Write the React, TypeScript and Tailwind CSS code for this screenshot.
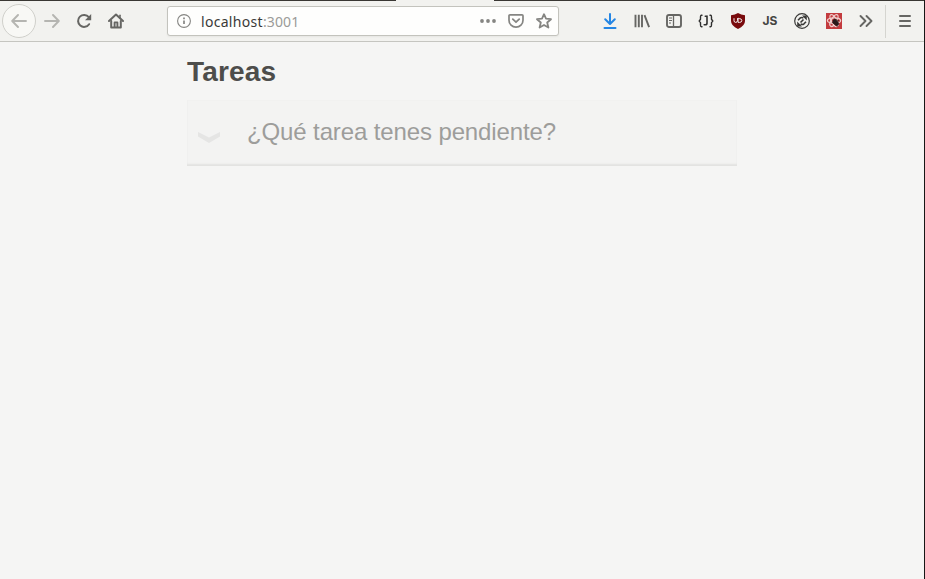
import React from 'react';

type IconProps = { children: React.ReactNode; className?: string };

function Icon({ children, className = 'text-[#666663]' }: IconProps) {
  return (
    <svg
      viewBox="0 0 16 16"
      className={`h-4 w-4 shrink-0 ${className}`}
      fill="none"
      stroke="currentColor"
      strokeWidth="2"
      strokeLinecap="round"
      strokeLinejoin="round"
    >
      {children}
    </svg>
  );
}

function ToolButton({ children, label }: { children: React.ReactNode; label: string }) {
  return (
    <button aria-label={label} className="flex h-8 w-8 shrink-0 items-center justify-center">
      {children}
    </button>
  );
}

function AddressBar() {
  return (
    <div className="ml-[35px] flex h-[30px] w-[392px] shrink-0 items-center rounded-[3px] border border-[#c3c3bd] bg-[#fefefd] shadow-[0_1px_2px_rgba(0,0,0,0.05)]">
      <Icon className="ml-2 text-[#858582]">
        <circle cx="8" cy="8" r="6.4" strokeWidth="1.1" />
        <path d="M8 7.5v3.4" strokeWidth="1.7" strokeLinecap="butt" />
        <path d="M8 4.5v1.7" strokeWidth="1.7" strokeLinecap="butt" />
      </Icon>
      <div className="ml-[9px] mt-px flex-1 whitespace-nowrap text-[14px] leading-5">
        <span className="inline-block w-[62px] tracking-[0.3px] text-[#3a3a38]">localhost</span>
        <span className="tracking-[0.1px] text-[#9b9b98]">:3001</span>
      </div>
      <div className="mr-1.5 flex items-center gap-3">
        <Icon className="text-[#858582]">
          <g fill="currentColor" stroke="none">
            <circle cx="2" cy="8" r="1.9" />
            <circle cx="8" cy="8" r="1.9" />
            <circle cx="14" cy="8" r="1.9" />
          </g>
        </Icon>
        <Icon className="text-[#858582]">
          <path d="M2 1.8h12a1 1 0 0 1 1 1v4.4a7 7 0 0 1-14 0V2.8a1 1 0 0 1 1-1z" strokeWidth="1.7" />
          <path d="M4.8 6.2L8 9.2l3.2-3" strokeWidth="1.8" />
        </Icon>
        <Icon className="text-[#858582]">
          <path d="M8 1.2l2 4.5 5 .5-3.8 3.3 1.2 5L8 11.9l-4.4 2.6 1.2-5L1 6.2l5-.5z" strokeWidth="1.8" />
        </Icon>
      </div>
    </div>
  );
}

function Toolbar() {
  return (
    <header className="flex h-[41px] shrink-0 items-center border-b border-[#c5c5c0] bg-[#f2f2ef]">
      <button
        aria-label="Atrás"
        className="ml-0.5 flex h-[34px] w-[34px] shrink-0 items-center justify-center rounded-full border border-[#d0d0cb] bg-[#f8f8f5]"
      >
        <Icon className="text-[#b5b5b1]">
          <path d="M15 8H1.5M7 2L1.2 8 7 14" strokeWidth="1.9" />
        </Icon>
      </button>
      <ToolButton label="Adelante">
        <Icon className="text-[#b5b5b1]">
          <path d="M1 8h13.5M9 2l5.8 6L9 14" strokeWidth="1.9" />
        </Icon>
      </ToolButton>
      <ToolButton label="Recargar">
        <Icon>
          <path d="M13.1 11.2A6 6 0 1 1 12.8 4.2" />
          <path d="M15.2 1v6.2H9z" fill="currentColor" stroke="none" />
        </Icon>
      </ToolButton>
      <ToolButton label="Inicio">
        <Icon>
          <path d="M1 8l7-6.5L15 8" />
          <path d="M3.2 8v6.6h9.6V8" />
          <path d="M6.6 14V9.4h2.8V14" strokeWidth="1.9" />
          <path d="M12 2.2v3" strokeWidth="1.5" />
        </Icon>
      </ToolButton>
      <AddressBar />
      <nav className="ml-[35px] flex items-center">
        <ToolButton label="Descargas">
          <Icon className="text-[#2586e4]">
            <path d="M8 1v9.5M3.2 6.3L8 11l4.8-4.7M2.5 15h11" />
          </Icon>
        </ToolButton>
        <ToolButton label="Biblioteca">
          <Icon>
            <path d="M1.5 1.8v12.4M4.8 1.8v12.4M8 1.8v12.4M10.5 2.2l4.6 12" strokeWidth="1.9" strokeLinecap="butt" />
          </Icon>
        </ToolButton>
        <ToolButton label="Barra lateral">
          <Icon>
            <rect x="1" y="2" width="14" height="12" rx="2" strokeWidth="1.9" />
            <path d="M7.5 2v12" strokeWidth="1.3" />
            <path d="M3 5h3M3 7.5h3M3 10h2" strokeWidth="1" strokeLinecap="butt" />
          </Icon>
        </ToolButton>
        <ToolButton label="JSON">
          <Icon className="text-[#30302f]">
            <path d="M4 2.3H3.4Q2.5 2.3 2.5 4v2.3L1.2 8l1.3 1.6V12q0 1.7.9 1.7H4M12 2.3h.6q.9 0 .9 1.7v2.3L14.8 8l-1.3 1.6V12q0 1.7-.9 1.7H12" strokeWidth="1.4" />
            <path d="M9 3v7q0 1.8-1.7 1.8H6.2M7.3 3.3H9" strokeWidth="1.6" />
          </Icon>
        </ToolButton>
        <ToolButton label="Bloqueador">
          <Icon>
            <path d="M8 0Q11 2 15 2.2V8q0 4.8-7 8-7-3.2-7-8V2.2Q5 2 8 0z" fill="#790b0d" stroke="none" />
            <path d="M4 5.6v2q0 1.8 1.7 1.8t1.8-1.8v-2M8.1 5.6v3.8h1.5q2.2 0 2.2-1.9T9.6 5.6z" stroke="#f5eeee" strokeWidth="1" />
          </Icon>
        </ToolButton>
        <ToolButton label="JavaScript">
          <span className="font-[Inter,sans-serif] text-[12px] font-bold leading-4 text-[#444442]">JS</span>
        </ToolButton>
        <ToolButton label="Sincronizar">
          <Icon className="text-[#393937]">
            <circle cx="8" cy="8" r="7.3" strokeWidth="1.2" />
            <path d="M4 7.2L6 5.2Q7.4 4 9.4 5M12 8.8l-2 2Q8.6 12 6.6 11M6.5 9.5l3-3" strokeWidth="1.6" strokeLinecap="butt" />
            <path d="M8 2.6h4.8v4.8zM8 13.4H3.2V8.6z" fill="currentColor" stroke="none" />
          </Icon>
        </ToolButton>
        <ToolButton label="React">
          <Icon>
            <path d="M0 0h16v16H0z" fill="#c33b3e" stroke="none" />
            <g stroke="#f0cfcd" strokeWidth="1.3">
              <ellipse cx="8" cy="7.5" rx="6.6" ry="2.7" />
              <ellipse cx="8" cy="7.5" rx="6.6" ry="2.7" transform="rotate(60 8 7.5)" />
              <ellipse cx="8" cy="7.5" rx="6.6" ry="2.7" transform="rotate(120 8 7.5)" />
            </g>
            <ellipse cx="9.7" cy="9.5" rx="2.4" ry="3.8" fill="#29191a" stroke="none" transform="rotate(-42 9.7 9.5)" />
            <path d="M6.3 9.5l5 4M8.8 6l4.2 2" stroke="#3b1718" strokeWidth="0.9" />
          </Icon>
        </ToolButton>
        <ToolButton label="Más herramientas">
          <Icon>
            <path d="M2.5 3l5 5-5 5M8.5 3l5 5-5 5" strokeWidth="1.9" />
          </Icon>
        </ToolButton>
      </nav>
      <div className="ml-[3px] flex h-[33px] items-center border-l border-[#d5d5d0] pl-[3px]">
        <ToolButton label="Menú">
          <Icon>
            <path d="M3 3h10M3 8h10M3 13h10" strokeWidth="2" />
          </Icon>
        </ToolButton>
      </div>
    </header>
  );
}

export default function App() {
  return (
    <div className="flex h-[579px] w-[925px] flex-col overflow-hidden border-r border-[#171716] bg-[#f5f5f4] font-['Noto_Sans',sans-serif]">
      <div className="flex h-px shrink-0 justify-between bg-[#f2f2ef]">
        <div className="w-[396px] bg-[#393733]" />
        <div className="w-[430px] bg-[#393733]" />
      </div>
      <Toolbar />
      <main className="ml-[187px] w-[550px] font-['Liberation_Sans',Arial,sans-serif]">
        <h1 className="mt-[14px] text-[28px] font-bold leading-8 tracking-[0.15px] text-[#4d4d4b]">Tareas</h1>
        <section className="mt-3 flex h-[66px] items-center bg-[#f3f3f2] shadow-[inset_0_-3px_2px_-1px_#e2e2e0,inset_0_0_0_1px_#f1f1f0]">
          <svg viewBox="0 0 22 12" className="ml-[11px] mt-2.5 h-3 w-[22px] text-[#e5e5e4]">
            <path d="M0 0l11 5.4L22 0v4.6L11 11 0 4.6z" fill="currentColor" />
          </svg>
          <input
            className="mb-0.5 ml-[27px] w-[460px] bg-transparent text-[24px] leading-8 tracking-[-0.12px] outline-none placeholder:text-[#9d9d9b]"
            placeholder="¿Qué tarea tenes pendiente?"
          />
        </section>
      </main>
    </div>
  );
}
